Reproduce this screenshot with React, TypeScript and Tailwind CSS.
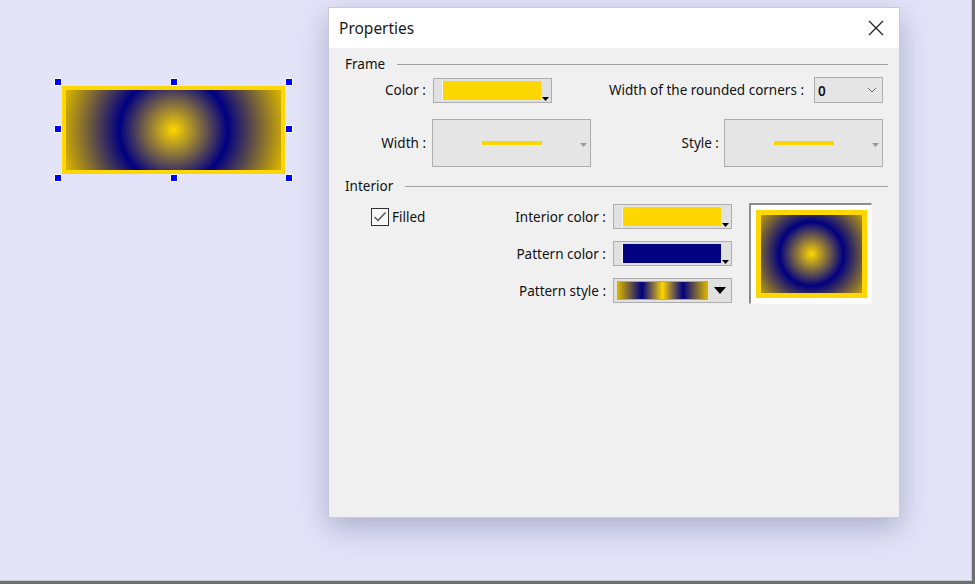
import type { ReactNode } from "react";

const FONT = "font-['Noto_Sans','Liberation_Sans',sans-serif]";

function Handle({ className }: { className: string }) {
  return (
    <div
      className={`absolute h-[8px] w-[8px] border border-white bg-[#0000ff] ${className}`}
    />
  );
}

function SelectedShape() {
  return (
    <div className="absolute left-[54px] top-[78px] h-[104px] w-[239px] p-[8px]">
      <div className="h-full w-full border-[4px] border-[#ffd700] bg-[radial-gradient(circle_at_center,#ffd700_0px,#000080_54px,#d4b000_112px)]" />
      <Handle className="left-0 top-0" />
      <Handle className="left-[116px] top-0" />
      <Handle className="right-0 top-0" />
      <Handle className="left-0 top-[47px]" />
      <Handle className="right-0 top-[47px]" />
      <Handle className="bottom-0 left-0" />
      <Handle className="bottom-0 left-[116px]" />
      <Handle className="bottom-0 right-0" />
    </div>
  );
}

function SectionHeader({ label }: { label: string }) {
  return (
    <div className="flex h-4 items-center pl-[16px] pr-[11px]">
      <span className="pt-[2px] text-[13.5px] leading-none text-[#111]">{label}</span>
      <div className="ml-[12px] h-px flex-1 bg-[#a0a0a0]" />
    </div>
  );
}

function Label({ width, children }: { width?: string; children: ReactNode }) {
  return (
    <div
      className={`flex justify-end whitespace-nowrap pt-[2px] text-[13.5px] leading-none text-[#111] ${width ?? "flex-1"}`}
    >
      {children}
    </div>
  );
}

function ColorButton({ fill }: { fill: string }) {
  return (
    <div className="relative flex h-[25px] w-[119px] border border-[#adadad] bg-[#e1e1e1]">
      <div className="w-[9px] border-r border-[#f4f4f4]" />
      <div className={`my-[2px] w-[98px] ${fill}`} />
      <svg
        className="absolute bottom-[1px] right-[2px]"
        width="7"
        height="4"
        viewBox="0 0 7 4"
      >
        <path d="M0 0 H7 L3.5 4 Z" fill="#000" />
      </svg>
    </div>
  );
}

function LineBox() {
  return (
    <div className="relative flex h-[48px] w-[159px] items-center justify-center border border-[#adadad] bg-[#e5e5e5]">
      <div className="h-[4px] w-[60px] bg-[#ffd700]" />
      <svg
        className="absolute right-[3px] top-[23px]"
        width="7"
        height="4"
        viewBox="0 0 7 4"
      >
        <path d="M0 0 H7 L3.5 4 Z" fill="#9a9a9a" />
      </svg>
    </div>
  );
}

function CheckBox() {
  return (
    <svg width="18" height="18" viewBox="0 0 18 18">
      <rect x="0.5" y="0.5" width="17" height="17" fill="#f7f7f7" stroke="#333" />
      <path
        d="M3.5 9 L7 12.5 L14.5 4.5"
        fill="none"
        stroke="#555"
        strokeWidth="1.4"
      />
    </svg>
  );
}

function PropertiesDialog() {
  return (
    <div
      className={`absolute left-[328px] top-[7px] flex h-[511px] w-[572px] flex-col border border-[#c9cadb] bg-[#f0f0f0] shadow-[0_10px_28px_rgba(70,70,120,0.35)] ${FONT}`}
    >
      <div className="flex h-[40px] shrink-0 items-center justify-between bg-white pl-[10px] pr-[15px]">
        <span className="pt-[2px] text-[15.5px] text-[#1a1a1a]">Properties</span>
        <svg width="16" height="16" viewBox="0 0 16 16">
          <path d="M1 1 L15 15 M15 1 L1 15" stroke="#222" strokeWidth="1.3" />
        </svg>
      </div>

      <div className="flex flex-col pt-[8px]">
        <SectionHeader label="Frame" />

        <div className="mt-[5px] flex h-[26px] items-center">
          <Label width="w-[97px]">Color :</Label>
          <div className="ml-[7px]">
            <ColorButton fill="bg-[#ffd700]" />
          </div>
          <Label>Width of the rounded corners :</Label>
          <div className="ml-[10px] mr-[16px] flex h-[26px] w-[69px] items-center justify-between border border-[#adadad] bg-[#e5e5e5] pl-[3px] pr-[5px]">
            <span className="pt-[2px] text-[13.5px] font-semibold text-[#111]">0</span>
            <svg width="10" height="6" viewBox="0 0 10 6">
              <path d="M1 1 L5 5 L9 1" fill="none" stroke="#666" strokeWidth="1" />
            </svg>
          </div>
        </div>

        <div className="mt-[16px] flex h-[48px] items-center">
          <Label width="w-[97px]">Width :</Label>
          <div className="ml-[6px]">
            <LineBox />
          </div>
          <Label>Style :</Label>
          <div className="ml-[5px] mr-[16px]">
            <LineBox />
          </div>
        </div>

        <div className="mt-[11px]">
          <SectionHeader label="Interior" />
        </div>

        <div className="mt-[9px] flex">
          <div className="ml-[42px] mt-[5px] flex h-[18px] w-[120px] items-center gap-[3px]">
            <CheckBox />
            <span className="pt-[1px] text-[13.5px] text-[#111]">Filled</span>
          </div>

          <div className="flex flex-1 flex-col gap-[12px] pt-[1px]">
            <div className="flex h-[25px] items-center">
              <Label>Interior color :</Label>
              <div className="ml-[7px]">
                <ColorButton fill="bg-[#ffd700]" />
              </div>
            </div>
            <div className="flex h-[25px] items-center">
              <Label>Pattern color :</Label>
              <div className="ml-[7px]">
                <ColorButton fill="bg-[#000080]" />
              </div>
            </div>
            <div className="flex h-[25px] items-center">
              <Label>Pattern style :</Label>
              <div className="ml-[7px] flex h-[25px] w-[119px] items-center border border-[#adadad] bg-[#e1e1e1] pl-[3px]">
                <div className="h-[19px] w-[91px] border border-[#a8a8a8] bg-[linear-gradient(to_right,#d8b400,#000080_27%,#8a7440_40%,#ffd700_50%,#8a7440_60%,#000080_73%,#d8b400)]" />
                <svg className="ml-[6px]" width="12" height="7" viewBox="0 0 12 7">
                  <path d="M0 0 H12 L6 7 Z" fill="#000" />
                </svg>
              </div>
            </div>
          </div>

          <div className="ml-[17px] mr-[27px] h-[101px] w-[123px] border-l-2 border-t-2 border-b border-r border-l-[#8c8c8c] border-t-[#8c8c8c] border-b-[#fafafa] border-r-[#fafafa] bg-white pl-[5px] pr-[4px] pt-[5px] pb-[5px]">
            <div className="h-full w-full border-[5px] border-[#ffd700] bg-[radial-gradient(circle_at_center,#ffd700_0px,#000080_32px,#d4b000_68px)]" />
          </div>
        </div>
      </div>
    </div>
  );
}

export default function App() {
  return (
    <div className="h-[584px] w-[975px] overflow-hidden bg-[#6f6f6f]">
      <div className="relative h-[581px] w-[972px] border-b border-r border-[#c9c9d6] bg-[#e3e4f8]">
        <SelectedShape />
        <PropertiesDialog />
      </div>
    </div>
  );
}
